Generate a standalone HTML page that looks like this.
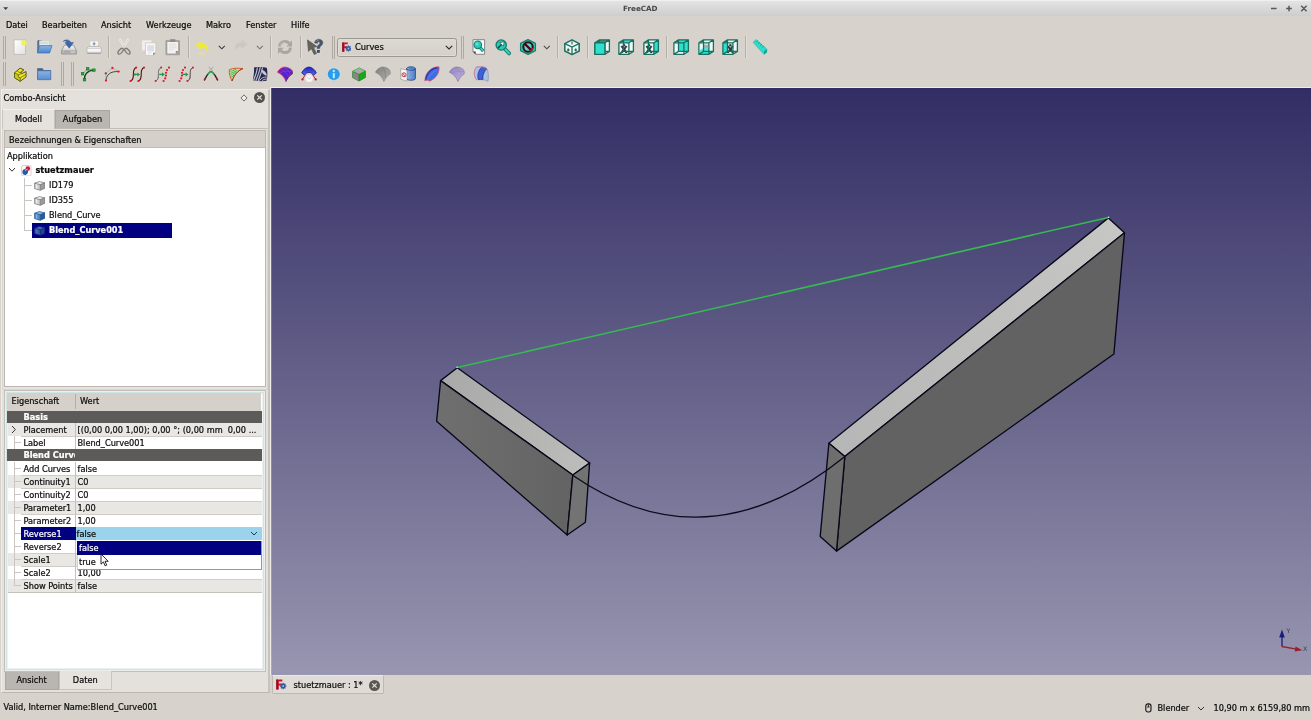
<!DOCTYPE html>
<html lang="de">
<head>
<meta charset="utf-8">
<title>FreeCAD</title>
<style>
*{box-sizing:border-box;margin:0;padding:0}
html,body{width:1311px;height:720px;overflow:hidden;background:#d7d3cc}
body{font-family:"DejaVu Sans","Liberation Sans",sans-serif;font-size:8.2px;color:#0c0c0c;position:relative;line-height:1}
.a{position:absolute}
.t{position:absolute;white-space:nowrap;line-height:10px;height:10px;-webkit-text-stroke:0.22px currentColor}
.b{font-weight:bold}
.w{color:#fff}
#titlebar{left:0;top:0;width:1311px;height:16px;background:linear-gradient(#f8f8f8 0,#e3e3e3 8%,#d9d9d9 50%,#cdcdcd 100%)}
.sep{position:absolute;width:1px;height:22px;background:#b4b0a8;box-shadow:1px 0 0 #e2dfda}
.hdl{position:absolute;width:2.9px;height:23.5px;border-left:1px solid #aeaaa2;border-right:1px solid #aeaaa2}
.ic{position:absolute;width:16px;height:16px;overflow:visible}
.row{position:absolute;left:8px;width:254px;height:13px}
.alt{background:#e9e7e4}
.grp{position:absolute;left:7.4px;width:254.4px;height:12.2px;background:#5d5b59}
.vl{position:absolute;left:75px;width:1px;background:#c4c1bb}
.br{position:absolute;background:#cac7c2}
</style>
</head>
<body>
<div id="app" style="position:absolute;left:0;top:0;width:1311px;height:720px;will-change:transform">
<!-- TITLE BAR -->
<div id="titlebar" class="a"></div>
<svg class="a" style="left:3.4px;top:6.8px" width="5.4" height="3.2" viewBox="0 0 5.4 3.2"><path d="M0.2 0.2h5L2.7 3z" fill="#3f3f3f"/></svg>
<div class="t b" style="left:0;width:1280.6px;top:3.7px;text-align:center;color:#484848;font-size:7.2px;-webkit-text-stroke:0">FreeCAD</div>
<svg class="a" style="left:1266px;top:2.6px" width="45" height="11" viewBox="0 0 45 11" stroke="#585858" stroke-width="1.5" fill="none"><path d="M5 5.500h5.600M20.200 5.500h5.600M23 2.700v5.600M35.200 2.800l5.400 5.400M40.600 2.800l-5.400 5.400"/></svg>

<!-- MENU BAR -->
<div class="t" style="left:6px;top:19.8px">Datei</div>
<div class="t" style="left:42px;top:19.8px">Bearbeiten</div>
<div class="t" style="left:101px;top:19.8px">Ansicht</div>
<div class="t" style="left:146px;top:19.8px">Werkzeuge</div>
<div class="t" style="left:206px;top:19.8px">Makro</div>
<div class="t" style="left:246px;top:19.8px">Fenster</div>
<div class="t" style="left:291px;top:19.8px">Hilfe</div>

<!-- TOOLBAR HANDLES AND SEPARATORS -->
<div class="hdl" style="left:2.8px;top:35.5px"></div>
<div class="sep" style="left:108px;top:36px"></div>
<div class="sep" style="left:188px;top:36px"></div>
<div class="sep" style="left:270px;top:36px"></div>
<div class="sep" style="left:300px;top:36px"></div>
<div class="hdl" style="left:331.9px;top:35.5px"></div>
<div class="hdl" style="left:461.3px;top:35.5px"></div>
<div class="sep" style="left:557px;top:36px"></div>
<div class="sep" style="left:587px;top:36px"></div>
<div class="sep" style="left:666px;top:36px"></div>
<div class="sep" style="left:745px;top:36px"></div>
<div class="hdl" style="left:2.8px;top:62.3px;height:24px"></div>
<div class="hdl" style="left:60.8px;top:62.3px;height:24px"></div>
<div class="hdl" style="left:71.4px;top:62.3px;height:24px"></div>

<!-- WORKBENCH COMBO -->
<div class="a" style="left:337px;top:37.5px;width:119.5px;height:19px;border:1px solid #9c988f;border-radius:2.5px;background:linear-gradient(#dcd8d2,#d5d1ca);box-shadow:inset 0 0 0 1px #dfdcd6"></div>
<div class="t" style="left:355px;top:42px;font-size:8.3px">Curves</div>
<svg class="a" style="left:445px;top:44.5px" width="8" height="5" viewBox="0 0 8 5"><path d="M0.8 0.8l3.2 3.2L7.2 0.8" fill="none" stroke="#2a2a2a" stroke-width="1.1"/></svg>
<!-- dropdown arrows on toolbar -->
<svg class="a" style="left:218px;top:44.5px" width="8" height="5" viewBox="0 0 8 5"><path d="M0.8 0.8l3 3L6.8 0.8" fill="none" stroke="#3a3a3a" stroke-width="1.05"/></svg>
<svg class="a" style="left:256.2px;top:44.5px" width="8" height="5" viewBox="0 0 8 5"><path d="M0.8 0.8l3 3L6.8 0.8" fill="none" stroke="#75726d" stroke-width="1.05"/></svg>
<svg class="a" style="left:543.2px;top:44.5px" width="8" height="5" viewBox="0 0 8 5"><path d="M0.8 0.8l3 3L6.8 0.8" fill="none" stroke="#4a4744" stroke-width="1.05"/></svg>

<!-- COMBO VIEW DOCK -->
<div class="a" style="left:1px;top:89px;width:269px;height:604px;background:#e4e1dd;border:1px solid #efedea;border-right:2px solid #c6c2bc;border-bottom:1.6px solid #bcb8b1"></div>
<div class="t" style="left:3.5px;top:93px">Combo-Ansicht</div>
<svg class="a" style="left:239.7px;top:93.5px" width="8" height="8" viewBox="0 0 8 8"><path d="M4 0.9L7.1 4L4 7.1L0.9 4z" fill="#efedea" stroke="#5a5652" stroke-width="0.85" stroke-linejoin="miter"/></svg>
<svg class="a" style="left:254px;top:92px" width="11" height="11" viewBox="0 0 11 11"><circle cx="5.5" cy="5.5" r="5.5" fill="#55514d"/><path d="M3.3 3.3l4.4 4.4M7.7 3.3l-4.4 4.4" stroke="#ece9e5" stroke-width="1.2"/></svg>

<!-- tabs Modell / Aufgaben -->
<div class="a" style="left:55px;top:110px;width:55px;height:18px;background:#b9b6b1;border:1px solid #aaa7a1;border-bottom:none"></div>
<div class="a" style="left:2px;top:128px;width:266px;height:262px;border:1px solid #d9d6d0;border-top-color:#c2beb7;background:#e6e3df"></div>
<div class="a" style="left:2px;top:109px;width:53px;height:20px;background:#e5e2de;border:1px solid #c9c5be;border-bottom:none;border-top-color:#f2f0ed"></div>
<div class="t" style="left:2px;width:53px;text-align:center;top:114px">Modell</div>
<div class="t" style="left:55px;width:55px;text-align:center;top:114px">Aufgaben</div>

<!-- tree group -->
<div class="a" style="left:4px;top:130px;width:262px;height:257px;border:1px solid #bcb8b1;background:#fff"></div>
<div class="a" style="left:5px;top:131px;width:260px;height:17px;background:#d5d1ca;border-bottom:1px solid #c0bcb5"></div>
<div class="t" style="left:9px;top:135px">Bezeichnungen &amp; Eigenschaften</div>
<div class="t" style="left:7px;top:151px">Applikation</div>
<svg class="a" style="left:8px;top:167px" width="8" height="6" viewBox="0 0 8 6"><path d="M1 1l3 3.2L7 1" fill="none" stroke="#333" stroke-width="1"/></svg>
<div class="t b" style="left:35.5px;top:165px">stuetzmauer</div>
<div class="br" style="left:24px;top:178px;width:1px;height:52px"></div>
<div class="br" style="left:24px;top:185px;width:8px;height:1px"></div>
<div class="br" style="left:24px;top:200px;width:8px;height:1px"></div>
<div class="br" style="left:24px;top:215px;width:8px;height:1px"></div>
<div class="br" style="left:24px;top:230px;width:8px;height:1px"></div>
<div class="a" style="left:32px;top:223px;width:139.5px;height:14.5px;background:#000080"></div>
<div class="t" style="left:49px;top:180px">ID179</div>
<div class="t" style="left:49px;top:195px">ID355</div>
<div class="t" style="left:49px;top:210px">Blend_Curve</div>
<div class="t b w" style="left:49px;top:225px">Blend_Curve001</div>

<!-- property editor -->
<div class="a" style="left:4px;top:390px;width:261.5px;height:282px;border:1px solid #c3bfb8;background:#fff;box-shadow:inset 0 0 0 1px #efeeec, inset 0 0 0 2px #cfe4e5, inset 0 0 0 3px #e9f3f3"></div>
<div class="a" style="left:7px;top:393px;width:254.4px;height:17.5px;background:#d5d1ca"></div>
<div class="a" style="left:75px;top:394px;width:1px;height:15px;background:#b3afa8"></div>
<div class="t" style="left:11.5px;top:396px">Eigenschaft</div>
<div class="t" style="left:80px;top:396px">Wert</div>

<div class="grp" style="top:410.5px"></div>
<div class="t b w" style="left:23.5px;top:411.5px">Basis</div>
<div class="row alt" style="top:423px"></div>
<div class="row" style="top:436px"></div>
<div class="grp" style="top:449.2px"></div>
<div class="t b w" style="left:23.5px;top:450.2px;width:51.8px;overflow:hidden">Blend Curve</div>
<div class="row" style="top:462px"></div>
<div class="row alt" style="top:475px"></div>
<div class="row" style="top:488px"></div>
<div class="row alt" style="top:501px"></div>
<div class="row" style="top:514px"></div>
<div class="row" style="top:540px"></div>
<div class="row alt" style="top:553px"></div>
<div class="row" style="top:566px"></div>
<div class="row alt" style="top:579px"></div>
<!-- row separators -->
<div class="a" style="left:21px;top:435.5px;width:241px;height:1px;background:#cfccc6"></div>
<div class="a" style="left:21px;top:474.5px;width:241px;height:1px;background:#cfccc6"></div>
<div class="a" style="left:21px;top:487.5px;width:241px;height:1px;background:#cfccc6"></div>
<div class="a" style="left:21px;top:500.5px;width:241px;height:1px;background:#cfccc6"></div>
<div class="a" style="left:21px;top:513.5px;width:241px;height:1px;background:#cfccc6"></div>
<div class="a" style="left:21px;top:526.5px;width:241px;height:1px;background:#cfccc6"></div>
<div class="a" style="left:21px;top:552.5px;width:241px;height:1px;background:#cfccc6"></div>
<div class="a" style="left:21px;top:565.5px;width:241px;height:1px;background:#cfccc6"></div>
<div class="a" style="left:21px;top:578.5px;width:241px;height:1px;background:#cfccc6"></div>
<div class="a" style="left:8px;top:591.5px;width:254px;height:1px;background:#c4c1bb"></div>
<div class="vl" style="top:423px;height:26px"></div>
<div class="vl" style="top:462px;height:130px"></div>
<!-- branch lines in property tree -->
<div class="br" style="left:14px;top:436px;width:1px;height:13px"></div>
<div class="br" style="left:14px;top:442px;width:7px;height:1px"></div>
<div class="br" style="left:14px;top:462px;width:1px;height:124px"></div>
<div class="br" style="left:14px;top:468px;width:7px;height:1px"></div>
<div class="br" style="left:14px;top:481px;width:7px;height:1px"></div>
<div class="br" style="left:14px;top:494px;width:7px;height:1px"></div>
<div class="br" style="left:14px;top:507px;width:7px;height:1px"></div>
<div class="br" style="left:14px;top:520px;width:7px;height:1px"></div>
<div class="br" style="left:14px;top:533px;width:7px;height:1px"></div>
<div class="br" style="left:14px;top:546px;width:7px;height:1px"></div>
<div class="br" style="left:14px;top:559px;width:7px;height:1px"></div>
<div class="br" style="left:14px;top:572px;width:7px;height:1px"></div>
<div class="br" style="left:14px;top:585px;width:7px;height:1px"></div>
<svg class="a" style="left:11px;top:425px" width="6" height="9" viewBox="0 0 6 9"><path d="M1 1l3.4 3.5L1 8" fill="none" stroke="#333" stroke-width="1"/></svg>

<div class="t" style="left:23.5px;top:424.5px">Placement</div>
<div class="t" style="left:77.5px;top:424.5px">[(0,00 0,00 1,00); 0,00 °; (0,00 mm&nbsp; 0,00 ...</div>
<div class="t" style="left:23.5px;top:437.5px">Label</div>
<div class="t" style="left:77.5px;top:437.5px">Blend_Curve001</div>
<div class="t" style="left:23.5px;top:463.5px">Add Curves</div>
<div class="t" style="left:77.5px;top:463.5px">false</div>
<div class="t" style="left:23.5px;top:476.5px">Continuity1</div>
<div class="t" style="left:77.5px;top:476.5px">C0</div>
<div class="t" style="left:23.5px;top:489.5px">Continuity2</div>
<div class="t" style="left:77.5px;top:489.5px">C0</div>
<div class="t" style="left:23.5px;top:502.5px">Parameter1</div>
<div class="t" style="left:77.5px;top:502.5px">1,00</div>
<div class="t" style="left:23.5px;top:515.5px">Parameter2</div>
<div class="t" style="left:77.5px;top:515.5px">1,00</div>
<!-- selected row -->
<div class="a" style="left:21px;top:527px;width:54.5px;height:12.8px;background:#000080"></div>
<div class="a" style="left:75.5px;top:527px;width:186.5px;height:12.8px;background:#9cd3ec"></div>
<div class="t w" style="left:23.5px;top:528.5px">Reverse1</div>
<div class="t" style="left:76.5px;top:528.5px">false</div>
<svg class="a" style="left:250px;top:531px" width="8" height="6" viewBox="0 0 8 6"><path d="M1 1l3 3L7 1" fill="none" stroke="#1d3a6a" stroke-width="1"/></svg>
<div class="t" style="left:23.5px;top:541.5px">Reverse2</div>
<div class="t" style="left:23.5px;top:554.5px">Scale1</div>
<div class="t" style="left:23.5px;top:567.5px">Scale2</div>
<div class="t" style="left:77.5px;top:567.5px">10,00</div>
<div class="t" style="left:23.5px;top:580.5px">Show Points</div>
<div class="t" style="left:77.5px;top:580.5px">false</div>
<!-- dropdown popup -->
<div class="a" style="left:76.5px;top:540.5px;width:185px;height:29px;background:#fff;border:1px solid #9a9792;border-left-color:#d4d2ce;border-top:none"></div>
<div class="a" style="left:77px;top:540.5px;width:184px;height:14.5px;background:#000080"></div>
<div class="t w" style="left:79px;top:543px">false</div>
<div class="t" style="left:79px;top:556.5px">true</div>
<svg class="a" style="left:99.5px;top:552.5px" width="9" height="14" viewBox="0 0 9 14"><path d="M1 1v10.2l2.4-2.3 1.7 3.9 1.6-.7-1.7-3.8h3.2z" fill="#fff" stroke="#111" stroke-width="0.9" stroke-linejoin="round"/></svg>

<!-- Ansicht / Daten tabs -->
<div class="a" style="left:4.5px;top:672px;width:54px;height:17.5px;background:#b9b6b1;border:1px solid #aaa7a1;border-top:none"></div>
<div class="a" style="left:58.5px;top:670.5px;width:53.5px;height:19px;background:#e6e3df;border:1px solid #c9c5be;border-top:none"></div>
<div class="t" style="left:4.5px;width:54px;text-align:center;top:675px">Ansicht</div>
<div class="t" style="left:58.5px;width:53.5px;text-align:center;top:675px">Daten</div>

<!-- MDI TAB -->
<div class="a" style="left:271.5px;top:675.4px;width:112.8px;height:19px;background:#dfdcd7;border:1px solid #bdb9b2;border-top:1px solid #eceae6;border-radius:0 0 2px 2px"></div>
<div class="t" style="left:293.5px;top:680px">stuetzmauer : 1*</div>
<svg class="a" style="left:368.5px;top:679.5px" width="11" height="11" viewBox="0 0 11 11"><circle cx="5.5" cy="5.5" r="5.5" fill="#5b5753"/><path d="M3.3 3.3l4.4 4.4M7.7 3.3l-4.4 4.4" stroke="#e6e3df" stroke-width="1.2"/></svg>

<!-- STATUS BAR -->
<div class="t" style="left:3.5px;top:701.5px">Valid, Interner Name:Blend_Curve001</div>
<svg class="a" style="left:1145.4px;top:703px" width="7" height="10" viewBox="0 0 7 10"><rect x="0.8" y="0.8" width="5.2" height="8.2" rx="2.2" fill="none" stroke="#1a1a1a" stroke-width="1.15"/><path d="M3.4 1.4v2.6M2.2 4h2.4" stroke="#1a1a1a" stroke-width="0.9" fill="none"/></svg>
<div class="t" style="left:1157.5px;top:703px">Blender</div>
<svg class="a" style="left:1196.5px;top:705.5px" width="8" height="6" viewBox="0 0 8 6"><path d="M1 1l3 3L7 1" fill="none" stroke="#333" stroke-width="1"/></svg>
<div class="t" style="left:1213.5px;top:703px">10,90 m x 6159,80 mm</div>
<!-- 3D VIEW -->
<svg class="a" style="left:270px;top:87px" width="1041" height="588.2" viewBox="270 87 1041 588.2">
<defs>
<linearGradient id="bg" x1="0" y1="0" x2="0" y2="1"><stop offset="0" stop-color="#322d64"/><stop offset="1" stop-color="#9896b0"/></linearGradient>
<linearGradient id="tl" gradientUnits="userSpaceOnUse" x1="445" y1="375" x2="585" y2="468"><stop offset="0" stop-color="#a9a9a9"/><stop offset="1" stop-color="#bcbcba"/></linearGradient>
<linearGradient id="tr" gradientUnits="userSpaceOnUse" x1="835" y1="450" x2="1118" y2="225"><stop offset="0" stop-color="#b6b6b6"/><stop offset="1" stop-color="#c6c6c4"/></linearGradient>
<linearGradient id="fl" x1="0" y1="0" x2="1" y2="0"><stop offset="0" stop-color="#6f6f6f"/><stop offset="1" stop-color="#636363"/></linearGradient>
</defs>
<rect x="270" y="87" width="1041" height="589" fill="#efedea"/><rect x="271.2" y="88" width="1040" height="588" fill="url(#bg)"/>
<!-- left wall -->
<g stroke="#08081a" stroke-width="1.35" stroke-linejoin="round">
<polygon points="457.3,367.8 589.6,463 572.8,475 440.6,380.6" fill="url(#tl)"/>
<polygon points="440.6,380.600 572.8,475 567.2,535 436.6,421.2" fill="url(#fl)"/>
<polygon points="572.8,475 589.6,463 585.4,522.2 567.2,535" fill="#737373"/>
<!-- right wall -->
<polygon points="1108.4,217.900 1124.5,232.800 844.8,456.6 828.9,443.2" fill="url(#tr)"/>
<polygon points="844.8,456.6 1124.5,232.800 1113.9,354 836.5,551.1" fill="#626262"/>
<polygon points="828.9,443.2 844.8,456.6 836.5,551.1 820.2,536.4" fill="#6e6e6e"/>
</g>
<path d="M572.6 475.2C655.1 531.9 746.5 535.8 844.9 456.4" fill="none" stroke="#0a0a1c" stroke-width="1.3"/>
<line x1="457.3" y1="367.500" x2="1108.4" y2="217.500" stroke="#35bb50" stroke-width="1.500"/><circle cx="457" cy="367.300" r="0.800" fill="#dff5e2"/><circle cx="1108.600" cy="217.200" r="0.800" fill="#dff5e2"/>
<!-- axis cross -->
<g>
<path d="M1282 646.5V636" stroke="#171c80" stroke-width="1.3"/>
<path d="M1279.2 637.5L1282 629.5L1284.8 637.5z" fill="#171c80"/>
<path d="M1282 646.5L1296.5 649.2" stroke="#96202e" stroke-width="1.3"/>
<path d="M1295.6 646.6L1302.4 650.2L1294.8 651.6z" fill="#96202e"/>
<text x="1286.6" y="633.2" font-family="'DejaVu Sans','Liberation Sans',sans-serif" font-size="6.2" fill="#3a3a50">Y</text>
<text x="1303" y="650.6" font-family="'DejaVu Sans','Liberation Sans',sans-serif" font-size="6.2" fill="#3a3a50">X</text>
</g>
</svg>
<!-- TOOLBAR 1 ICONS -->
<svg width="0" height="0" style="position:absolute">
<defs>
<linearGradient id="gpg" x1="0" y1="0" x2="1" y2="1"><stop offset="0" stop-color="#ffffff"/><stop offset="1" stop-color="#e4e2e0"/></linearGradient>
<linearGradient id="gfo" x1="0" y1="0" x2="0" y2="1"><stop offset="0" stop-color="#8db6e6"/><stop offset="1" stop-color="#4a83c8"/></linearGradient>
<radialGradient id="gye"><stop offset="0" stop-color="#f6f84a"/><stop offset="0.55" stop-color="#eef05a"/><stop offset="1" stop-color="#eef05a" stop-opacity="0"/></radialGradient>
<linearGradient id="gdr" x1="0" y1="0" x2="0" y2="1"><stop offset="0" stop-color="#f3f3f3"/><stop offset="1" stop-color="#bdbdbd"/></linearGradient>
<g id="fclogo"><path d="M0.3 0.4H6.6V2.6H2.9V4.7H5.6V6.8H2.9V11H0.3z" fill="#c4152a"/><path d="M0.3 0.4H2V11H0.3z" fill="#8e0f1e"/><circle cx="7.4" cy="7.4" r="2.5" fill="#36579c"/><path d="M7.4 4v6.8M4 7.4h6.800M5 5l4.800 4.800M9.800 5l-4.800 4.800" stroke="#36579c" stroke-width="1.4"/><circle cx="7.400" cy="7.400" r="1.050" fill="#9db8e4"/></g>
<g id="cubefr" fill="none" stroke="#1a6f5f" stroke-width="1.3" stroke-linejoin="round"><path d="M0.900 3.800H10.900V15.300H0.900zM5.500 0.900H15.400V12.400H5.500zM0.900 3.800L5.500 0.900M10.900 3.800L15.400 0.900M10.900 15.300L15.400 12.400M0.900 15.300L5.500 12.400"/></g>
<g id="fig" fill="#2f3d3b"><path d="M2.600 7.600L4.400 6.600L6 8.800L7.800 6.400L9.400 7.400L7.400 10.200L9.600 14H7.400L6 11.800L4.400 14H2.200L4.600 10.200z"/><circle cx="6" cy="6.200" r="1.200"/></g>
<path id="cubebg" d="M0.900 3.800L5.500 0.900H15.400V12.400L10.900 15.300H0.900z" fill="#eef9f7"/>
</defs>
</svg>
<!-- new -->
<svg class="ic" style="left:11.6px;top:39px" viewBox="0 0 16 16"><path d="M2 0.8H13.6V15.4H2z" fill="url(#gpg)" stroke="#b9b6b2" stroke-width="0.8"/><circle cx="12" cy="3.8" r="3.6" fill="url(#gye)"/></svg>
<!-- open -->
<svg class="ic" style="left:36.2px;top:39px" viewBox="0 0 16 16"><path d="M1.2 2.2L2.2 1h3.2l1 1.2H12v11.6H1.2z" fill="#5b6f8c"/><path d="M3.4 1.6H13.2V9H3.4z" fill="#f1f1f1" stroke="#c4c4c4" stroke-width="0.5"/><path d="M4 3.2h8.4M4 4.8h8.4" stroke="#b8c4d4" stroke-width="0.7"/><path d="M3.6 6.6H16L13.6 14H1.4z" fill="url(#gfo)" stroke="#3c6eb0" stroke-width="0.7" stroke-linejoin="round"/></svg>
<!-- save -->
<svg class="ic" style="left:61.1px;top:39px" viewBox="0 0 16 16"><path d="M3.4 6.2H12.6L15.4 11.4V15H0.6V11.4z" fill="url(#gdr)" stroke="#8c8c8c" stroke-width="0.8" stroke-linejoin="round"/><path d="M1.2 11.6H14.8V14.4H1.2z" fill="#c9c9c9" stroke="#9a9a9a" stroke-width="0.6"/><path d="M2.6 13h7" stroke="#8a8a8a" stroke-width="0.9"/><path d="M2.2 2.4C4.2 0.2 8.6 0.2 9.8 3.6L12.4 3.6L8.2 9.2L4 3.6H6.4C5.6 1.8 3.6 1.6 2.2 2.4z" fill="#3b69ad" stroke="#2a5290" stroke-width="0.5"/></svg>
<!-- print (disabled) -->
<svg class="ic" style="left:85.500px;top:39px" viewBox="0 0 16 16"><path d="M3.800 1.800H12.400V7.600H3.800z" fill="#f6f6f5" stroke="#c9c7c3" stroke-width="0.700"/><path d="M8.100 2.800v2.600M6.800 4.400l1.300 1.500 1.300-1.500" stroke="#8e9bb0" stroke-width="1.100" fill="none"/><path d="M2.600 7.400H13.600L15.200 9V14.200H1V9z" fill="#ececeb" stroke="#b5b3af" stroke-width="0.800" stroke-linejoin="round"/><path d="M1.600 11H14.600" stroke="#fbfbfb" stroke-width="1.500"/><path d="M1.600 9.400H14.600" stroke="#cfcdc9" stroke-width="0.900"/><path d="M1.400 14.300h13.400" stroke="#a3a19d" stroke-width="1.300"/></svg>
<!-- cut (disabled) -->
<svg class="ic" style="left:115.600px;top:39px" viewBox="0 0 16 16"><path d="M4.200 0.800L9.200 9.800M11.800 0.800L6.800 9.800" stroke="#efedea" stroke-width="2.300" stroke-linecap="round"/><path d="M4.200 0.800L9 9.600M11.800 0.800L7 9.600" stroke="#c9c6c2" stroke-width="0.700"/><ellipse cx="4.600" cy="12.200" rx="1.700" ry="3.500" transform="rotate(42 4.600 12.200)" fill="none" stroke="#807c77" stroke-width="1.350"/><ellipse cx="11.400" cy="12.200" rx="1.700" ry="3.500" transform="rotate(-42 11.400 12.200)" fill="none" stroke="#807c77" stroke-width="1.350"/></svg>
<!-- copy (disabled) -->
<svg class="ic" style="left:140.500px;top:39px" viewBox="0 0 16 16"><path d="M0.800 1H10.800V11.800H0.800z" fill="#f1f0ee" stroke="#d6d3cf" stroke-width="0.700"/><path d="M4.400 3.800H14.800V13.800L12 16.400H4.400z" fill="#f8f8f7" stroke="#c4c1bd" stroke-width="0.700"/><path d="M6.200 6.200H13V12.400H6.200z" fill="#dcdfe5"/><path d="M6.800 13.600h4M6.800 14.800h3" stroke="#dedcd8" stroke-width="0.600"/><path d="M14.800 13.800L12 16.400V13.800z" fill="#8f8c88"/></svg>
<!-- paste (disabled) -->
<svg class="ic" style="left:165.200px;top:39px" viewBox="0 0 16 16"><path d="M0.900 1.600H14.500V15.800H0.900z" fill="#a6a29d" stroke="#96928d" stroke-width="0.600"/><path d="M2.300 3.100H13.100V12L10.800 14.400H2.300z" fill="#f2f1ef"/><path d="M5 0.200H10.400V2.700H5z" fill="#8d8984"/><path d="M4 5.200h7.400M4 7h7.400M4 8.800h7.400M4 10.600h4.600" stroke="#dedcd8" stroke-width="0.800"/><path d="M13.100 12L10.800 14.400V12z" fill="#8a8681"/></svg>
<!-- undo -->
<svg class="ic" style="left:193.7px;top:39.8px" viewBox="0 0 16 16"><path d="M1.6 5.2L7.4 1V3.4C12.6 3.2 15 7 13.4 11.4C12.8 8.4 10.8 7.4 7.4 7.6V10z" fill="#eee93a" stroke="#e8e36a" stroke-width="0.9" stroke-linejoin="round"/><ellipse cx="7.6" cy="13.6" rx="4.4" ry="1.5" fill="#e3e09a" opacity="0.55"/></svg>
<!-- redo (disabled) -->
<svg class="ic" style="left:232.9px;top:39px" viewBox="0 0 16 16"><path d="M14.4 5.2L8.6 1V3.4C3.4 3.2 1 7 2.6 11.4C3.2 8.4 5.2 7.4 8.6 7.6V10z" fill="#cbc7c1" stroke="#cfcbc5" stroke-width="0.8" stroke-linejoin="round"/></svg>
<!-- refresh (disabled) -->
<svg class="ic" style="left:277px;top:39px" viewBox="0 0 16 16"><path d="M2.6 7.6C2.6 4.4 5 2.6 8 2.6C9.8 2.6 11.2 3.2 12.2 4.4" fill="none" stroke="#a9a6a1" stroke-width="3"/><path d="M9.4 7.4H15V1.200z" fill="#a9a6a1"/><path d="M13.4 8.600C13.400 11.800 11 13.600 8 13.600C6.200 13.600 4.800 13 3.800 11.800" fill="none" stroke="#a9a6a1" stroke-width="3"/><path d="M6.600 8.800H1V15z" fill="#a9a6a1"/><path d="M3 6.600C3.400 4.600 5.400 3.400 8 3.400" fill="none" stroke="#c4c1bc" stroke-width="1"/></svg>
<!-- what's this -->
<svg class="ic" style="left:306.8px;top:39px" viewBox="0 0 16 16"><path d="M0.400 0.800L10 7.600L6.600 8.400L9.600 14.400L7.200 15.600L4.400 9.800L1.400 12.400z" fill="#66635f" stroke="#4c4a47" stroke-width="0.5" stroke-linejoin="round"/><path d="M7.600 4C7.600 1.400 9.800 0.200 11.800 0.200C14.200 0.200 15.800 1.600 15.800 3.800C15.800 5.600 14.600 6.400 13.600 7.200C12.900 7.800 12.800 8.400 12.800 9.600H10C10 7.800 10.400 6.800 11.400 6C12.400 5.200 12.800 4.800 12.800 4C12.800 3.200 12.400 2.800 11.700 2.800C10.900 2.800 10.500 3.300 10.500 4.300z" fill="#46566c" stroke="#34445a" stroke-width="0.4"/><path d="M9.200 2.600C9.800 1.600 10.800 1.200 11.800 1.200" fill="none" stroke="#9aa8bc" stroke-width="0.7"/><rect x="10" y="11" width="2.800" height="2.800" fill="#3a4a60"/></svg>
<!-- FreeCAD logo in combo -->
<svg class="a" style="left:341.7px;top:41.7px" width="9.6" height="10.2" viewBox="0 0 11 11.5"><use href="#fclogo"/></svg>
<!-- fit all -->
<svg class="ic" style="left:470.5px;top:39px" viewBox="0 0 16 16"><path d="M2 0.700H13.600V15.300H4.600L2 12.700z" fill="#fafbfb" stroke="#6e6e6e" stroke-width="0.800"/><path d="M2 12.600H4.700V15.300z" fill="#333"/><path d="M8.400 8L12.400 12.200" stroke="#177e6c" stroke-width="3.200"/><path d="M8.400 8L12.400 12.200" stroke="#34d4c4" stroke-width="1.600"/><circle cx="6.800" cy="5.800" r="3.800" fill="#2bc9b9" stroke="#177e6c" stroke-width="1.100"/><circle cx="6" cy="5" r="1.700" fill="#6fe6d8" opacity="0.750"/></svg>
<!-- fit selection -->
<svg class="ic" style="left:495.200px;top:39px" viewBox="0 0 16 16"><path d="M9 9L14.200 14.400" stroke="#177e6c" stroke-width="3.800" stroke-linecap="round"/><path d="M9 9L14.200 14.400" stroke="#34d4c4" stroke-width="1.900" stroke-linecap="round"/><circle cx="6.200" cy="6" r="5.100" fill="#2bc9b9" stroke="#177e6c" stroke-width="1.400"/><path d="M3 9L7 5" stroke="#123c36" stroke-width="1.300"/><path d="M4.800 3.600L9.200 2.800L8.400 7.200z" fill="#ffffff" stroke="#123c36" stroke-width="0.600" stroke-linejoin="round"/></svg>
<!-- draw style -->
<svg class="ic" style="left:519.800px;top:39px" viewBox="0 0 16 16"><path d="M8 0.600L15.400 4.400V11.600L8 15.400L0.600 11.600V4.400z" fill="#2fcfbf" stroke="#177e6c" stroke-width="1.300" stroke-linejoin="round"/><circle cx="8" cy="8" r="4.700" fill="#5adccd" stroke="#3d0a14" stroke-width="2.100"/><path d="M4.600 4.600L11.400 11.400" stroke="#3d0a14" stroke-width="2.200"/><path d="M9.600 12.200C11.400 11.600 12.400 10.400 12.600 8.800" fill="none" stroke="#b81c2c" stroke-width="1.400"/></svg>
<!-- isometric -->
<svg class="ic" style="left:563.600px;top:39px" viewBox="0 0 16 16"><path d="M8 0.800L15.200 4.600V12L8 15.600L0.800 12V4.600z" fill="#e9f6f4" stroke="#1a6f5f" stroke-width="1.500" stroke-linejoin="round"/><path d="M0.800 4.600L8 8L15.200 4.600M8 8V15.600" stroke="#1a6f5f" stroke-width="1.300" fill="none"/><path d="M4.200 9.400v3M3 11h2.600M11.800 9.400v3M10.400 11h2.600M8 2.400v3" stroke="#2f3d3b" stroke-width="1"/></svg>
<!-- front -->
<svg class="ic" style="left:593.600px;top:39px" viewBox="0 0 16 16"><use href="#cubebg"/><path d="M0.900 3.800L5.500 0.900H15.400L10.900 3.800z" fill="#4a8a80"/><use href="#cubefr"/><path d="M0.900 3.800H10.900V15.300H0.900z" fill="#2fe0cf" stroke="#1a6f5f" stroke-width="1.300" stroke-linejoin="round"/></svg>
<!-- top -->
<svg class="ic" style="left:618.200px;top:39px" viewBox="0 0 16 16"><use href="#cubebg"/><path d="M0.900 3.800L5.500 0.900H15.400L10.900 3.800z" fill="#2fe0cf"/><use href="#fig"/><use href="#cubefr"/></svg>
<!-- right -->
<svg class="ic" style="left:642.900px;top:39px" viewBox="0 0 16 16"><use href="#cubebg"/><path d="M10.900 3.800L15.400 0.900V12.400L10.900 15.300z" fill="#2fe0cf"/><use href="#fig"/><use href="#cubefr"/></svg>
<!-- rear -->
<svg class="ic" style="left:672.900px;top:39px" viewBox="0 0 16 16"><use href="#cubebg"/><path d="M5.500 0.900H15.400V12.400H5.500z" fill="#2fe0cf"/><path d="M1.600 12.400H5V14.600H1.600z" fill="#fff"/><path d="M2.200 6H4.600V11H2.200z" fill="#f4fbfa"/><use href="#cubefr"/></svg>
<!-- bottom -->
<svg class="ic" style="left:697.500px;top:39px" viewBox="0 0 16 16"><use href="#cubebg"/><path d="M0.900 15.300L5.500 12.400H15.400L10.900 15.300z" fill="#2fe0cf"/><path d="M2 11L5.500 9H10.900V14.600H2z" fill="#2fe0cf" opacity="0.850"/><path d="M6 5.600H10V9H6z" fill="#9ab5b0"/><use href="#cubefr"/></svg>
<!-- left -->
<svg class="ic" style="left:722.100px;top:39px" viewBox="0 0 16 16"><use href="#cubebg"/><path d="M0.900 3.800L5.500 0.900V12.400L0.900 15.300z" fill="#2fe0cf"/><use href="#fig" transform="translate(2.400 0)"/><use href="#cubefr"/></svg>
<!-- measure -->
<svg class="ic" style="left:751.600px;top:39px" viewBox="0 0 16 16"><path d="M1 3.200L4.200 0.600L14.800 10V13.200L12 15.400z" fill="#2fdccb" stroke="#27b3a3" stroke-width="0.600" stroke-linejoin="round"/><path d="M12 15.400L14.800 13.200V10L12 12.200z" fill="#1f9f90"/><path d="M4.200 3l1.400-1.200M6.200 4.800l1.400-1.200M8.200 6.600l1.400-1.200M10.200 8.400l1.400-1.200" stroke="#1a6f5f" stroke-width="0.700"/></svg>
<!-- TOOLBAR 2 ICONS -->
<svg width="0" height="0" style="position:absolute">
<defs>
<linearGradient id="gfo2" x1="0" y1="0" x2="0" y2="1"><stop offset="0" stop-color="#8ab2e2"/><stop offset="1" stop-color="#5b8fd0"/></linearGradient>
<linearGradient id="gpur" x1="0" y1="0" x2="1" y2="1"><stop offset="0" stop-color="#a01878"/><stop offset="0.45" stop-color="#4a28d8"/><stop offset="1" stop-color="#7a1aa0"/></linearGradient>
<linearGradient id="gblu" x1="0" y1="0" x2="0" y2="1"><stop offset="0" stop-color="#1a22c8"/><stop offset="1" stop-color="#5a6ae8"/></linearGradient>
<linearGradient id="ggry" x1="0" y1="0" x2="1" y2="1"><stop offset="0" stop-color="#7f7f7d"/><stop offset="1" stop-color="#b4b2ae"/></linearGradient>
<linearGradient id="glav" x1="0" y1="0" x2="1" y2="1"><stop offset="0" stop-color="#9182c4"/><stop offset="1" stop-color="#c0b6dc"/></linearGradient>
<linearGradient id="gcyl" x1="0" y1="0" x2="1" y2="0"><stop offset="0" stop-color="#8fb4e8"/><stop offset="1" stop-color="#4f7fc8"/></linearGradient>
<radialGradient id="ginf" cx="0.5" cy="0.45" r="0.55"><stop offset="0" stop-color="#2f9ff0"/><stop offset="0.8" stop-color="#2a98e6"/><stop offset="1" stop-color="#5cc4f4"/></radialGradient>
<path id="sail" d="M0.400 6.200C2 3 5 1.200 7.400 1C10.400 1 13.400 2.400 15 4.400L15.300 7.800C12.400 9.600 10.400 12.200 8.900 15.500C7.600 11.400 4.600 8 0.400 6.200z"/>
</defs>
</svg>
<!-- part -->
<svg class="ic" style="left:11.600px;top:66px" viewBox="0 0 16 16"><g transform="translate(0.900 1.400) scale(0.900)"><path d="M1.800 6L8 0.800L12.200 2.800L8.600 5.600L10.600 6.600L14.600 4.600V10.600L8.200 15.400L1.800 11.400z" fill="#ece526" stroke="#55540c" stroke-width="1.100" stroke-linejoin="round"/><path d="M1.800 6L6 8.200V10.600L8.200 11.600V15.400L1.800 11.400z" fill="#cfc91c" stroke="#55540c" stroke-width="0.800"/><path d="M6 8.200L10.600 6.600M8.200 11.600L14.600 7.600M5 4.400L9 6.400" fill="none" stroke="#6a6912" stroke-width="0.900"/></g></svg>
<!-- group folder -->
<svg class="ic" style="left:36.200px;top:66px" viewBox="0 0 16 16"><path d="M1.200 2.200H6.600L7.600 4H14.800V13.600H1.200z" fill="#4e5d78"/><path d="M1.600 4.800H14.800V13.700H1.600z" fill="url(#gfo2)" stroke="#4a74b2" stroke-width="0.700"/></svg>
<!-- bspline with green nodes -->
<svg class="ic" style="left:79.7px;top:66px" viewBox="0 0 16 16"><path d="M4.4 13.8C4 8.6 7 4.6 14 4.2" fill="none" stroke="#15401c" stroke-width="1.3"/><path d="M2.6 7.6L7.6 2.8L14 4.2" fill="none" stroke="#2a9a3a" stroke-width="0.6"/><g fill="#1faa35" stroke="#0e6a1e" stroke-width="0.5"><rect x="3.2" y="12.4" width="2.6" height="2.6"/><rect x="1.3" y="6.4" width="2.6" height="2.6"/><rect x="6.3" y="1.5" width="2.6" height="2.6"/><rect x="12.6" y="2.9" width="2.6" height="2.6"/></g></svg>
<!-- curve with red poles -->
<svg class="ic" style="left:104.3px;top:66px" viewBox="0 0 16 16"><path d="M2 14.6C2.4 9 6 5 14.6 5.6" fill="none" stroke="#24402a" stroke-width="0.9"/><path d="M2 14.6L1.8 7.4L8.4 2L14.6 5.6" fill="none" stroke="#6a9a70" stroke-width="0.4"/><g fill="#e0182a"><circle cx="2" cy="14.6" r="1.15"/><circle cx="1.8" cy="7.4" r="1.15"/><circle cx="8.4" cy="2" r="1.15"/><circle cx="14.6" cy="5.6" r="1.15"/></g></svg>
<!-- join curves -->
<svg class="ic" style="left:129px;top:66px" viewBox="0 0 16 16"><path d="M1.6 15C4.8 13.6 4.2 10.6 4.4 8.4C4.6 5.8 4 3 7.2 1.6M9.4 15C12.6 13.6 12 10.6 12.2 8.4C12.4 5.8 11.8 3 15 1.6" fill="none" stroke="#5a0a12" stroke-width="1.1"/><path d="M5.2 8.4H9.6" stroke="#1e9a38" stroke-width="1.3"/><path d="M8.4 6.4L11 8.4L8.4 10.4z" fill="#1e9a38"/><path d="M6.4 6.9L4.4 8.4L6.4 9.9z" fill="#1e9a38"/><g fill="#e0182a"><circle cx="1.6" cy="15" r="1.1"/><circle cx="7.2" cy="1.6" r="1.1"/><circle cx="9.4" cy="15" r="1.1"/><circle cx="15" cy="1.6" r="1.1"/></g></svg>
<!-- discretize -->
<svg class="ic" style="left:153.6px;top:66px" viewBox="0 0 16 16"><path d="M1.6 15C4.8 13.6 4.2 10.6 4.4 8.4C4.6 5.8 4 3 7.2 1.6" fill="none" stroke="#5e5e5e" stroke-width="1"/><path d="M5.2 8.4H9" stroke="#1e9a38" stroke-width="1.3"/><path d="M8 6.3L10.8 8.4L8 10.5z" fill="#1e9a38"/><g fill="#e0182a"><circle cx="1.6" cy="15" r="1"/><circle cx="7.2" cy="1.6" r="1"/><circle cx="9.6" cy="15" r="1.1"/><circle cx="11.2" cy="12.4" r="1.1"/><circle cx="12" cy="9.6" r="1.1"/><circle cx="12" cy="6.8" r="1.1"/><circle cx="13" cy="4" r="1.1"/><circle cx="15" cy="1.6" r="1.1"/></g></svg>
<!-- approximate -->
<svg class="ic" style="left:178.2px;top:66px" viewBox="0 0 16 16"><path d="M9.4 15C12.6 13.6 12 10.6 12.2 8.4C12.4 5.8 11.8 3 15 1.6" fill="none" stroke="#4a2a30" stroke-width="1"/><path d="M4.6 8.4H8.6" stroke="#1e9a38" stroke-width="1.3"/><path d="M7.6 6.3L10.4 8.4L7.6 10.5z" fill="#1e9a38"/><g fill="#e0182a"><circle cx="9.4" cy="15" r="1"/><circle cx="15" cy="1.6" r="1"/><circle cx="1.6" cy="15" r="1.1"/><circle cx="3.2" cy="12.4" r="1.1"/><circle cx="4" cy="9.6" r="1.1"/><circle cx="4" cy="6.8" r="1.1"/><circle cx="5" cy="4" r="1.1"/><circle cx="7" cy="1.6" r="1.1"/></g></svg>
<!-- parabola -->
<svg class="ic" style="left:203.2px;top:66px" viewBox="0 0 16 16"><path d="M5.6 0.8L9.6 5M10.4 0.8L6.4 5" stroke="#8a8884" stroke-width="0.6"/><path d="M1.2 14.4C3.6 10.2 5.4 5.6 8 5.6C10.6 5.6 12.4 10.2 14.8 14.4" fill="none" stroke="#15251a" stroke-width="1.4"/><path d="M5 8.8C6 6.6 7 5.6 8 5.6C9 5.6 10 6.6 11 8.8" fill="none" stroke="#2fae44" stroke-width="1.3"/><path d="M1.2 14.4L2.6 11.8M14.8 14.4L13.4 11.8" stroke="#b01c24" stroke-width="1.3"/></svg>
<!-- comb plot -->
<svg class="ic" style="left:227.8px;top:66px" viewBox="0 0 16 16"><path d="M1.4 3.6C5.4 1.6 10.6 2.2 15 2.6C10 4.4 6.4 8.6 4 15C2.2 11.6 0.8 7.4 1.4 3.6z" fill="#bfe6a0" stroke="#d4562a" stroke-width="1" stroke-linejoin="round"/><path d="M2.4 5.4L8.4 3.2M2.4 7.4L9.4 4.6M2.8 9.4L7.6 6.6M3.2 11.4L6 9.2" stroke="#2f9a3a" stroke-width="0.7"/><path d="M15 2.6C10 4.4 6.4 8.6 4 15" fill="none" stroke="#7a3a1a" stroke-width="0.8"/></svg>
<!-- zebra -->
<svg class="ic" style="left:252.400px;top:66px" viewBox="0 0 16 16"><path d="M2 1.400C6.400 0.800 11 0.800 14.800 1.800C15.600 5.600 15.600 10.600 14.600 14.800C10 15.400 5.600 15.200 0.800 14.200C1.600 10 2.400 5.600 2 1.400z" fill="#26284a"/><path d="M9.400 3.400C12.600 4.400 14.600 6.400 14.800 9.800C13 9.400 11.400 8.600 10.400 7z" fill="#c9c7e0"/><path d="M5.400 1.200C5 5.400 3.400 10 1.600 14.200M8.200 1C7.600 5.400 5.600 10.400 3.800 14.800M10.600 1.400C9.800 5 8.400 9.400 6.200 15" fill="none" stroke="#b9b7d2" stroke-width="1.200"/><path d="M7.600 14.600C9.400 11.600 12 10.800 14.800 11.200M9.600 15.200C11 13.400 13 13 14.800 13.200" fill="none" stroke="#c9c7e0" stroke-width="0.900"/></svg>
<!-- sweep surface -->
<svg class="ic" style="left:277px;top:66px" viewBox="0 0 16 16"><use href="#sail" fill="url(#gpur)" stroke="#e2386a" stroke-width="0.700" stroke-linejoin="round"/><path d="M3.600 3.400C7.400 5 10.400 8 11.800 11M6.800 1.400C10 3 12.600 6 13.600 8.800M2.400 7C5.600 5.400 10 4.400 15 5.600" fill="none" stroke="#c040c8" stroke-width="0.500" opacity="0.800"/><path d="M15 4.400L15.300 7.800C12.400 9.600 10.400 12.200 8.900 15.500" fill="none" stroke="#3a1468" stroke-width="0.700"/></svg>
<!-- profile support -->
<svg class="ic" style="left:301.400px;top:66px" viewBox="0 0 16 16"><circle cx="8.200" cy="12.400" r="3.700" fill="#f8f4f8" stroke="#e8d8e0" stroke-width="0.500"/><path d="M0.600 6.800C2.600 3 5.400 1.200 8 1C10.800 1.200 13.600 3.200 15.400 7L12.400 9.200C11.200 7.400 9.800 6.400 8 6.400C6.200 6.400 4.600 7.400 3.400 9.200z" fill="url(#gblu)" stroke="#14146c" stroke-width="0.700" stroke-linejoin="round"/><path d="M4.200 8.800L1.600 13.200M11.800 8.800L14.600 13.200" fill="none" stroke="#c4141e" stroke-width="0.900"/><circle cx="1.500" cy="13.400" r="1.100" fill="#c4141e"/><circle cx="14.700" cy="13.400" r="1.100" fill="#c4141e"/><path d="M6.200 10.800L8.200 13.200L10.200 10.800" fill="none" stroke="#a8d0c8" stroke-width="0.700"/></svg>
<!-- info -->
<svg class="ic" style="left:326px;top:66px" viewBox="0 0 16 16"><circle cx="7.800" cy="8.300" r="6.700" fill="#bfe6fa" opacity="0.600"/><circle cx="7.800" cy="8.300" r="6.100" fill="url(#ginf)"/><circle cx="7.800" cy="5" r="1.150" fill="#b8f0ff"/><path d="M6.800 7.200H8.800V12.200H6.800z" fill="#b8f0ff"/></svg>
<!-- solid -->
<svg class="ic" style="left:350.700px;top:66px" viewBox="0 0 16 16"><g transform="translate(0.900 1.300) scale(0.890)"><path d="M8.200 0.800L15.200 4.200V11.400L8 15.400L0.800 11.600V4.600z" fill="#8c8c8a" stroke="#2a8a2a" stroke-width="1" stroke-linejoin="round"/><path d="M0.800 4.600L8 8V15.400L0.800 11.600z" fill="#868884"/><path d="M8 8L15.200 4.200V11.400L8 15.400z" fill="#18a818"/><path d="M0.800 4.600L8.200 0.800L15.200 4.200L8 8z" fill="#a9a9a7"/><path d="M0.800 4.600L8 8L15.200 4.200M8 8V15.400" fill="none" stroke="#1a7a1a" stroke-width="0.700"/><path d="M0.800 4.600L8.200 0.800L15.200 4.200" fill="none" stroke="#58c858" stroke-width="0.800"/></g></svg>
<!-- gray surface -->
<svg class="ic" style="left:375.300px;top:66px" viewBox="0 0 16 16"><use href="#sail" fill="url(#ggry)" stroke="#807e7a" stroke-width="0.600" stroke-linejoin="round"/><path d="M7.400 1C9.800 4 10.800 8 10.400 12" fill="none" stroke="#6e6c68" stroke-width="0.500" opacity="0.700"/></svg>
<!-- doc + cylinder -->
<svg class="ic" style="left:399.7px;top:66px" viewBox="0 0 16 16"><path d="M6.6 2.6C6.6 0.4 15.4 0.4 15.4 2.6V12.6C15.4 14.8 6.6 14.8 6.6 12.6z" fill="url(#gcyl)" stroke="#2a3e6a" stroke-width="0.8"/><path d="M6.6 2.6C6.6 4.8 15.4 4.8 15.4 2.6" fill="none" stroke="#2a3e6a" stroke-width="0.8"/><path d="M7 1.6C9 0.2 13 0.2 15 1.6C13 3.4 9 3.4 7 1.6z" fill="#4a78c4"/><path d="M0.8 2.6L7 4.2V15.2L0.8 13.2z" fill="#f7f7f7" stroke="#8a8a8a" stroke-width="0.6" stroke-linejoin="round"/><circle cx="4" cy="8.8" r="2" fill="none" stroke="#d0202a" stroke-width="0.9"/><path d="M2.8 7.4L5.2 10.2" stroke="#d0202a" stroke-width="0.8"/></svg>
<!-- blue leaf -->
<svg class="ic" style="left:424.300px;top:66px" viewBox="0 0 16 16"><path d="M15 0.800C8 0.400 1.400 5.600 0.800 14.800C2.600 13.800 4.400 14 5.600 15.200C12.600 12.200 15.800 6.200 15 0.800z" fill="#3f6ae0" stroke="#e0507e" stroke-width="0.800" stroke-linejoin="round"/><path d="M13.400 1.600C7.400 2.400 2.600 7 1.600 13.600" fill="none" stroke="#2a2490" stroke-width="1.100" opacity="0.800"/><path d="M12.600 4C9 6 5.600 9.600 3.800 13.400" fill="none" stroke="#5a86ee" stroke-width="1.400" opacity="0.700"/></svg>
<!-- lavender surface -->
<svg class="ic" style="left:449px;top:66px" viewBox="0 0 16 16"><use href="#sail" fill="url(#glav)" stroke="#7a6a9c" stroke-width="0.600" stroke-linejoin="round"/><path d="M6.800 1.400C9.600 3.400 11.600 6.400 12.400 9.200M3 7C6.600 5.400 10.600 4.800 15 5.800" fill="none" stroke="#8a7ab0" stroke-width="0.450" opacity="0.800"/></svg>
<!-- blend surface -->
<svg class="ic" style="left:473.4px;top:66px" viewBox="0 0 16 16"><path d="M3.4 1C7.4 0.6 11.4 0.8 14 2.6C15.6 6 15.6 11 15 15.4C12 13.4 7.4 13.6 3.6 13.8C0.4 10 0.6 5 3.4 1z" fill="#a9c4e6" stroke="#7a8cb0" stroke-width="0.6"/><path d="M8.6 1.2C11 1 12.6 1.6 13.6 3C10.4 6.4 9.6 10 10 13.4C8.6 13.2 7 13.4 5.4 13.6C4 9.4 5.2 4.6 8.6 1.2z" fill="#3d62d6" stroke="#2a2a8a" stroke-width="0.7"/><path d="M3.4 1C7.4 0.6 11.4 0.8 14 2.6M3.6 13.8C0.4 10 0.6 5 3.4 1" fill="none" stroke="#e27aa0" stroke-width="0.8"/></svg>
<!-- TREE ICONS -->
<svg class="a" style="left:21px;top:164.500px" width="10.500" height="11.500" viewBox="0 0 10.500 11.500"><rect x="0.500" y="0.500" width="9.500" height="10.500" rx="1.600" fill="#fdfdfd" stroke="#d4b4ba" stroke-width="0.700"/><circle cx="6.800" cy="3.600" r="2.300" fill="#cc1a32"/><path d="M1.400 6.400C2 4.200 4.600 3.400 6.200 4.800C7.800 6.200 7.200 8.800 5 9.800C3.200 10.600 1 9 1.400 6.400z" fill="#2759a6"/><path d="M4 5.400L6.600 4.200" stroke="#f6e9ed" stroke-width="0.800"/></svg>
<svg class="a" style="left:33.900px;top:181.1px" width="11.400" height="9.800" viewBox="0 0 11.400 9.800"><path d="M0.600 2.200L5.200 0.600L10.800 1.800L6.200 3.600z" fill="#f2f2f2"/><path d="M0.600 2.200L6.200 3.600V9.300L0.600 7.600z" fill="#cfcfcf"/><path d="M6.200 3.600L10.800 1.800V7.300L6.200 9.300z" fill="#9c9c9c"/><path d="M2.600 2.900V8.100" stroke="#f0f0f0" stroke-width="1.100"/><path d="M0.600 2.200L5.200 0.600L10.800 1.800V7.300L6.200 9.300L0.600 7.600zM0.600 2.200L6.200 3.600L10.800 1.800M6.200 3.600V9.300" fill="none" stroke="#6f6f6f" stroke-width="0.700" stroke-linejoin="round"/></svg>
<svg class="a" style="left:33.900px;top:196.1px" width="11.400" height="9.800" viewBox="0 0 11.400 9.800"><path d="M0.600 2.200L5.200 0.600L10.800 1.800L6.200 3.600z" fill="#f2f2f2"/><path d="M0.600 2.200L6.200 3.600V9.300L0.600 7.600z" fill="#cfcfcf"/><path d="M6.200 3.600L10.800 1.800V7.300L6.200 9.300z" fill="#9c9c9c"/><path d="M2.600 2.900V8.100" stroke="#f0f0f0" stroke-width="1.100"/><path d="M0.600 2.200L5.200 0.600L10.800 1.800V7.300L6.200 9.300L0.600 7.600zM0.600 2.200L6.200 3.600L10.800 1.800M6.200 3.600V9.300" fill="none" stroke="#6f6f6f" stroke-width="0.700" stroke-linejoin="round"/></svg>
<svg class="a" style="left:33.900px;top:210.9px" width="11.400" height="9.800" viewBox="0 0 11.400 9.800"><path d="M0.600 2.200L5.200 0.600L10.800 1.800L6.200 3.600z" fill="#8fc0ee"/><path d="M0.600 2.200L6.200 3.600V9.300L0.600 7.600z" fill="#4f8fd2"/><path d="M6.200 3.600L10.800 1.800V7.300L6.200 9.300z" fill="#275a9e"/><path d="M2.600 2.900V8.100" stroke="#86b8ea" stroke-width="1.100"/><path d="M0.600 2.200L5.200 0.600L10.800 1.800V7.300L6.200 9.300L0.600 7.600zM0.600 2.200L6.200 3.600L10.800 1.800M6.200 3.600V9.300" fill="none" stroke="#1d4a84" stroke-width="0.700" stroke-linejoin="round"/></svg>
<svg class="a" style="left:33.900px;top:225.9px" width="11.400" height="9.800" viewBox="0 0 11.400 9.800"><path d="M0.600 2.200L5.200 0.600L10.800 1.800L6.200 3.600z" fill="#4f6fbc"/><path d="M0.600 2.200L6.200 3.600V9.300L0.600 7.600z" fill="#3a5aaa"/><path d="M6.200 3.600L10.800 1.800V7.300L6.200 9.300z" fill="#243e8e"/><path d="M2.600 2.900V8.100" stroke="#5272bc" stroke-width="1.100"/><path d="M0.600 2.200L5.200 0.600L10.800 1.800V7.300L6.200 9.300L0.600 7.600zM0.600 2.200L6.200 3.600L10.800 1.800M6.200 3.600V9.300" fill="none" stroke="#1a2e7c" stroke-width="0.700" stroke-linejoin="round"/></svg>
<!-- tab F logo -->
<svg class="a" style="left:276.300px;top:679.400px" width="10.600" height="11" viewBox="0 0 11 11.500"><use href="#fclogo"/></svg>
</div>
</body>
</html>
